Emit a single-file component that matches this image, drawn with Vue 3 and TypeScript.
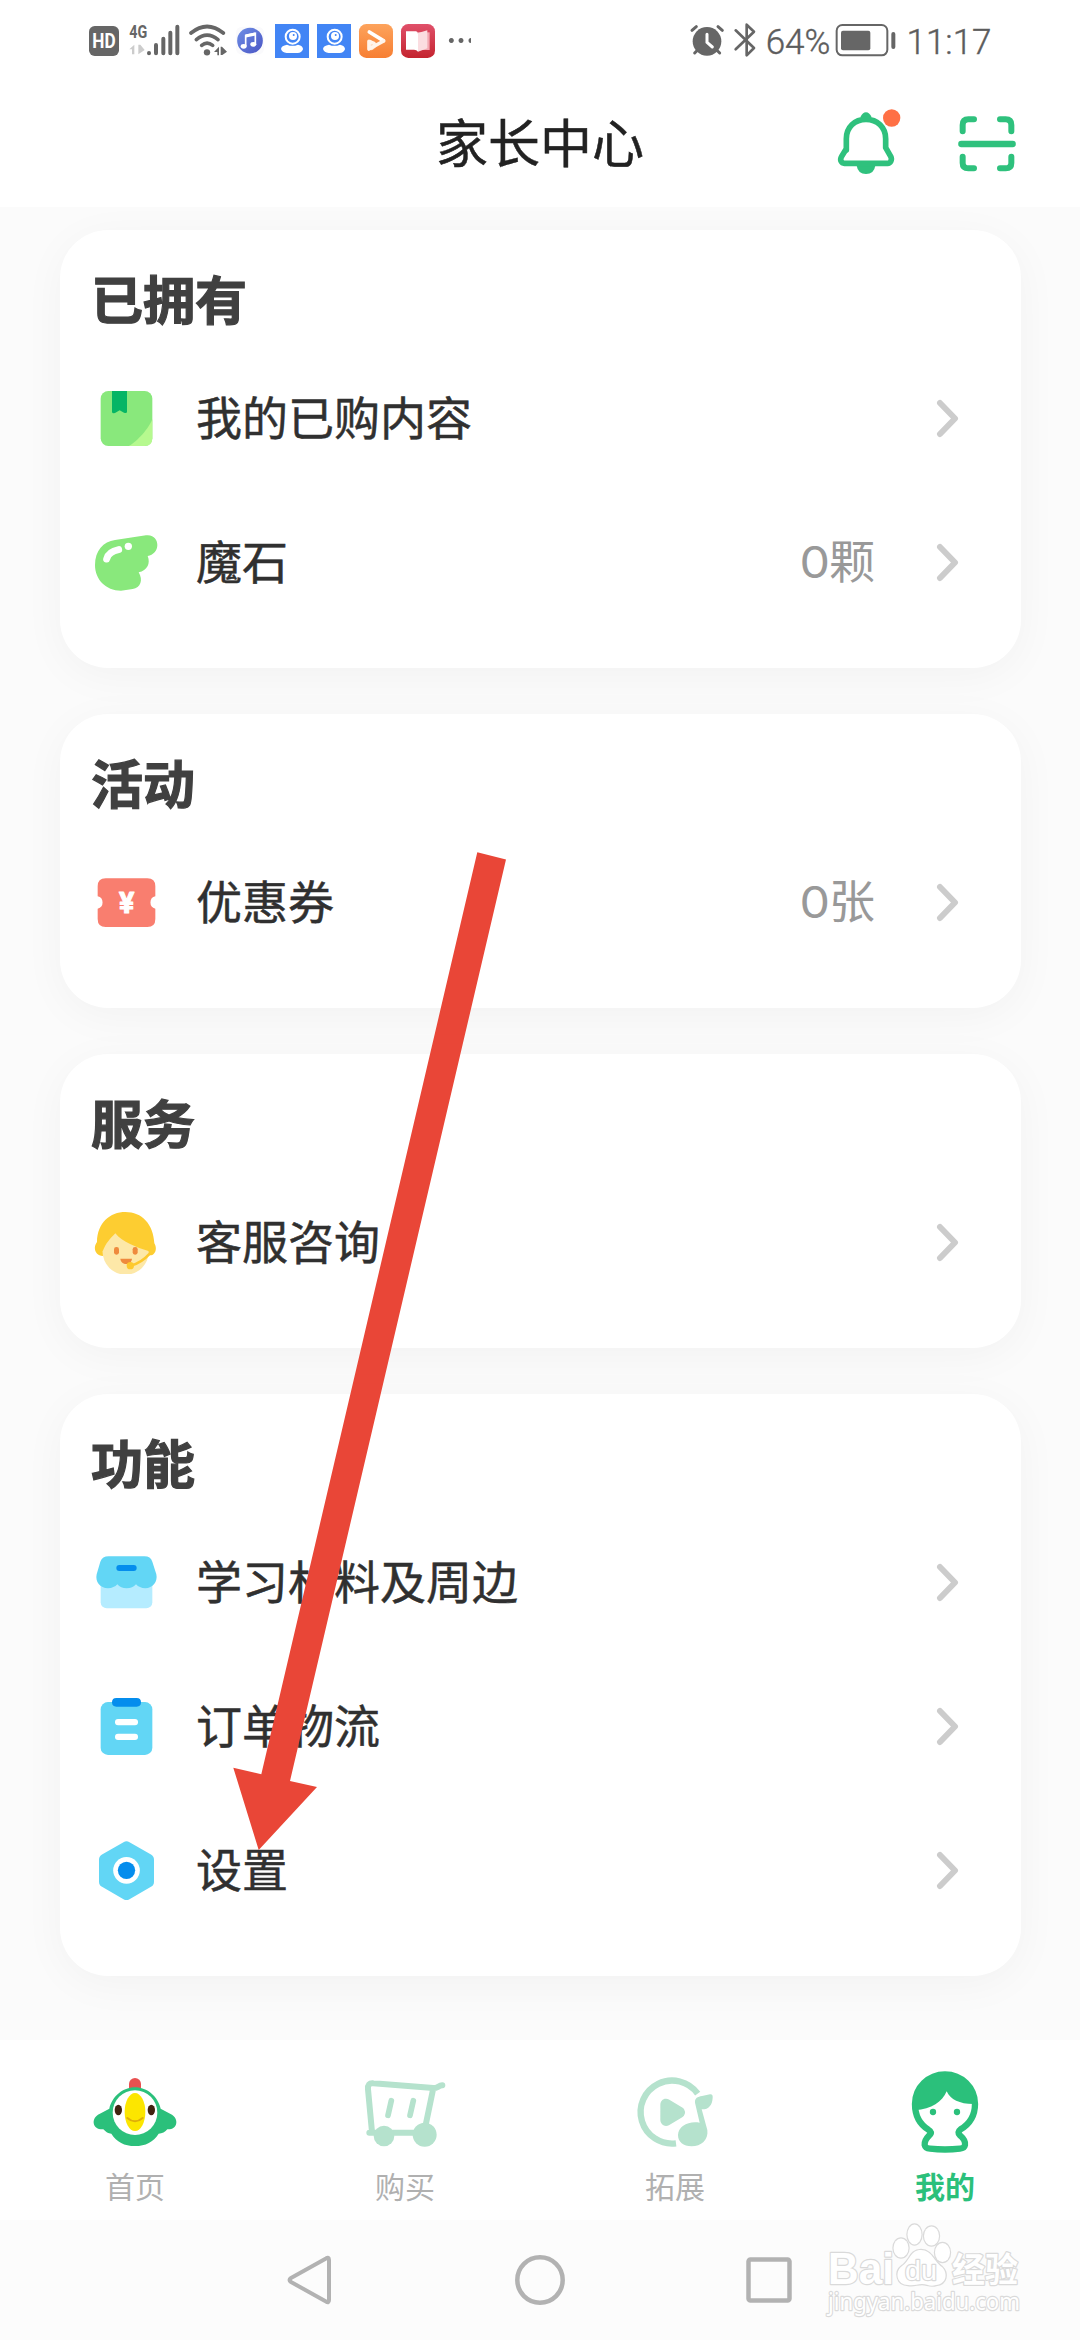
<script setup lang="ts">
interface Row {
  icon: string
  view: string
  label: string
  unit?: string
}
interface Section {
  title: string
  rows: Row[]
}

const sections: Section[] = [
  {
    title: '已拥有',
    rows: [
      { icon: 'book', view: '102 498 192 192', label: '我的已购内容' },
      { icon: 'stone', view: '102 930 192 192', label: '魔石', unit: '颗' },
    ],
  },
  {
    title: '活动',
    rows: [{ icon: 'coupon', view: '102 540 192 192', label: '优惠券', unit: '张' }],
  },
  {
    title: '服务',
    rows: [{ icon: 'service', view: '102 510 192 192', label: '客服咨询' }],
  },
  {
    title: '功能',
    rows: [
      { icon: 'store', view: '102 480 192 192', label: '学习材料及周边' },
      { icon: 'order', view: '102 102 192 192', label: '订单物流' },
      { icon: 'setting', view: '102 534 192 192', label: '设置' },
    ],
  },
]

const tabs = [
  { id: 'home', view: '90 111 270 270', label: '首页' },
  { id: 'cart', view: '900 111 270 270', label: '购买' },
  { id: 'expand', view: '90 111 270 270', label: '拓展' },
  { id: 'mine', view: '900 111 270 270', label: '我的' },
]
const activeTab = 'mine'
</script>

<template>
  <div class="screen">
    <header class="header">
      <div class="status">
        <div class="status-group">
          <svg width="36" height="42" viewBox="57 60 108 126">
            <rect x="57" y="78" width="90" height="90" rx="17" fill="#666" />
            <text x="67" y="145" class="badge" font-size="60" textLength="70" lengthAdjust="spacingAndGlyphs" fill="#fff">HD</text>
          </svg>
          <svg width="59" height="42" viewBox="165 60 177 126">
            <text x="178" y="114" class="badge" font-size="54" textLength="54" lengthAdjust="spacingAndGlyphs" fill="#666">4G</text>
            <path d="M178 148L193 134V163H186V148ZM205 134H211L224 150L205 163Z" fill="#ccc" />
            <g stroke="#666" stroke-width="12" stroke-linecap="round">
              <path d="M237 159V160M258 135V160M280 116V160M301 98V160M322 80V160" />
            </g>
          </svg>
          <svg width="48" height="42" viewBox="342 60 144 126">
            <g fill="none" stroke="#666" stroke-width="11" stroke-linecap="round">
              <path d="M363 99Q411 60 460 99" />
              <path d="M379 119Q411 92 444 119" />
              <path d="M395 136Q411 123 428 136" />
            </g>
            <circle cx="411" cy="157" r="9.500" fill="#666" />
            <path d="M432 156L447 140V166H442V156ZM452 140H456L471 155L457 165H452Z" fill="#666" />
          </svg>
          <svg width="38" height="42" viewBox="486 60 114 126">
            <defs>
              <linearGradient id="music" x1="0" y1="0" x2="1" y2="1">
                <stop offset="0" stop-color="#6f8fe6" /><stop offset="1" stop-color="#4a55c4" />
              </linearGradient>
            </defs>
            <rect x="498" y="80" width="84" height="84" rx="18" fill="#fafafc" />
            <circle cx="540" cy="122" r="38.500" fill="url(#music)" />
            <path d="M527 138V106L556 100V132" fill="none" stroke="#fff" stroke-width="5" />
            <path d="M527 108L556 102" stroke="#fff" stroke-width="9" />
            <ellipse cx="521" cy="139" rx="9" ry="7" fill="#fff" />
            <ellipse cx="550" cy="133" rx="9" ry="7" fill="#fff" />
          </svg>
          <svg v-for="n in 2" :key="n" width="42" height="42" viewBox="600 60 126 126">
            <rect x="615" y="72" width="102" height="102" fill="#4285f5" />
            <circle cx="668" cy="110" r="21" fill="none" stroke="#fff" stroke-width="6" />
            <circle cx="669" cy="108" r="12" fill="#fff" />
            <circle cx="671" cy="105" r="3" fill="#4285f5" />
            <path d="M651 134Q667 141 684 134Q700 138 699 148Q695 159 683 159H650Q636 158 633 147Q634 137 651 134Z" fill="#fff" />
          </svg>
          <svg width="42" height="42" viewBox="852 60 126 126">
            <defs>
              <linearGradient id="play" x1="0" y1="0" x2="0" y2="1">
                <stop offset="0" stop-color="#fda35c" /><stop offset="1" stop-color="#f77f33" />
              </linearGradient>
            </defs>
            <rect x="867" y="72" width="102" height="102" rx="22" fill="url(#play)" />
            <g fill="none" stroke-linecap="round" stroke-linejoin="round" stroke-width="11">
              <path d="M900 125L905 145L913 138" stroke="#ffd9bb" />
              <path d="M898 96L940 122" stroke="#fff" />
              <path d="M941 123L897 147V124L912 130" stroke="#fff4ea" />
            </g>
          </svg>
          <svg width="43" height="42" viewBox="978 60 129 126">
            <defs>
              <linearGradient id="reader" x1="0" y1="0" x2="0" y2="1">
                <stop offset="0" stop-color="#e0506a" /><stop offset="1" stop-color="#c4242f" />
              </linearGradient>
            </defs>
            <rect x="993" y="72" width="102" height="102" rx="22" fill="url(#reader)" />
            <path d="M1044 97H1079V150H1044Z" fill="#f3a9b3" />
            <path d="M1044 99L1072 91V145L1044 155Z" fill="#fbdde1" />
            <path d="M1008 94H1038Q1044 95 1044 101V155Q1040 149 1032 149H1008Z" fill="#fff" />
          </svg>
          <svg width="35" height="42" viewBox="1107 60 105 126">
            <path d="M1144 114a7.500 7.500 0 1 0 .1 0ZM1173 114a7.500 7.500 0 1 0 .1 0ZM1203 114a7.500 7.500 0 1 0 0 15Z" fill="#666" />
          </svg>
        </div>
        <div class="status-group">
          <svg width="37" height="42" viewBox="84 60 111 126">
            <circle cx="138" cy="124" r="43" fill="#666" />
            <path d="M93 91L106 80M184 91L171 80M107 153L101 159M170 153L176 159" stroke="#666" stroke-width="9" stroke-linecap="round" />
            <path d="M138 103V127L154 141" fill="none" stroke="#fff" stroke-width="9" stroke-linecap="round" />
          </svg>
          <svg width="37" height="42" viewBox="195 60 111 126">
            <path d="M224 91L279 144L257 166V74L279 95L224 148" fill="none" stroke="#666" stroke-width="8" stroke-linecap="round" stroke-linejoin="round" />
          </svg>
          <span class="status-text percent">64%</span>
          <svg width="64" height="42" viewBox="516 60 192 126">
            <rect x="527" y="75" width="152" height="91" rx="17" fill="none" stroke="#666" stroke-width="6" />
            <rect x="540" y="92" width="88" height="59" rx="6" fill="#666" />
            <rect x="691" y="96" width="12" height="51" rx="6" fill="#666" />
          </svg>
          <span class="status-text clock">11:17</span>
        </div>
      </div>

      <div class="titlebar">
        <div class="side"></div>
        <h1>家长中心</h1>
        <div class="side actions">
          <svg width="68" height="72" viewBox="528 324 204 216">
            <path d="M601 352Q608 337 618 337T635 352Z" fill="#2fc17d" />
            <path d="M590 497Q594 522 618 522T646 497Z" fill="#2fc17d" />
            <path d="M559 450V416C559 382 584 358 618 358S677 382 677 416V443L692 469C698 481 690 490 683 490H553C545 490 538 481 545 469L559 446Z" fill="none" stroke="#2fc17d" stroke-width="17" stroke-linejoin="round" />
            <circle cx="695" cy="354" r="26" fill="#ff7045" />
          </svg>
          <svg width="62" height="62" viewBox="888 339 186 186">
            <g fill="none" stroke="#2fc17d" stroke-width="18" stroke-linecap="round">
              <path d="M942 358H925Q908 358 908 375V394M1020 358H1037Q1054 358 1054 375V394M908 470V489Q908 505 925 505H942M1054 470V489Q1054 505 1037 505H1020" />
              <path d="M904 432H1058" stroke-width="19" />
            </g>
          </svg>
        </div>
      </div>
    </header>

    <main class="content">
      <section v-for="section in sections" :key="section.title" class="card">
        <h2>{{ section.title }}</h2>
        <div v-for="row in section.rows" :key="row.label" class="row">
          <svg class="row-icon" :viewBox="row.view">
            <template v-if="row.icon === 'book'">
              <rect x="122" y="513" width="155" height="165" rx="23" fill="#89e87c" />
              <path d="M277 598V655Q277 678 254 678H206C222 672 262 634 277 598Z" fill="#b6f98f" />
              <path d="M156 513H201V576Q200 581 192 578L179 571L165 579Q156 581 156 575Z" fill="#06b565" />
            </template>
            <template v-else-if="row.icon === 'stone'">
              <path d="M165 960L258 946C282 943 292 960 292 975C292 992 280 1005 263 1008C272 1030 262 1052 236 1057C250 1080 242 1104 218 1107L183 1112C137 1112 105 1078 105 1035C105 992 130 965 165 960Z" fill="#89e87c" />
              <path d="M140 1017C143 1005 155 993 176 989" fill="none" stroke="#fff" stroke-width="21" stroke-linecap="round" />
              <circle cx="205" cy="979" r="11" fill="#fff" />
            </template>
            <template v-else-if="row.icon === 'coupon'">
              <path d="M137 565H262Q286 565 286 589V619A19 19 0 0 0 286 656V687Q286 711 262 711H137Q113 711 113 687V656A19 19 0 0 0 113 619V589Q113 565 137 565Z" fill="#f97e6f" />
              <text x="200" y="670" class="yen">¥</text>
            </template>
            <template v-else-if="row.icon === 'service'">
              <ellipse cx="197" cy="635" rx="69" ry="69" fill="#fde8a8" />
              <path d="M196 516C150 516 112 548 111 606C98 622 105 648 129 648L128 634C137 610 151 595 166 580C187 607 230 622 265 633L267 646C286 648 293 625 283 610C280 552 246 516 196 516Z" fill="#fdcd31" />
              <path d="M270 640C250 662 232 672 212 677" fill="none" stroke="#fdc92e" stroke-width="8" />
              <rect x="162" y="621" width="15" height="23" rx="7" fill="#ef8a3d" />
              <rect x="218" y="621" width="15" height="23" rx="7" fill="#ef8a3d" />
              <path d="M181 656H216C214 677 183 677 181 656Z" fill="#ef8a3d" />
              <circle cx="211" cy="677" r="11" fill="#fdc92e" />
            </template>
            <template v-else-if="row.icon === 'store'">
              <rect x="122" y="560" width="155" height="95" rx="18" fill="#b5ecff" />
              <path d="M146 499H253Q272 499 277 515L289 553C294 575 278 595 256 595Q238 594 228 583Q218 595 200 595Q182 595 172 583Q162 594 144 595C120 595 105 575 110 553L121 515Q127 499 146 499Z" fill="#62d6f5" />
              <rect x="169" y="525" width="61" height="18" rx="9" fill="#048ded" />
            </template>
            <template v-else-if="row.icon === 'order'">
              <rect x="122" y="126" width="155" height="159" rx="22" fill="#62d6f5" />
              <path d="M169 114H230Q243 114 243 127Q243 140 230 140H169Q156 140 156 127Q156 114 169 114Z" fill="#048ded" />
              <rect x="165" y="177" width="69" height="19" rx="9" fill="#fff" />
              <rect x="165" y="221" width="69" height="19" rx="9" fill="#fff" />
            </template>
            <template v-else>
              <path d="M199.500 562L264 599V665L199.500 702L135 665V599Z" fill="#62d6f5" stroke="#62d6f5" stroke-width="36" stroke-linejoin="round" />
              <circle cx="199.500" cy="631" r="40" fill="#fff" />
              <circle cx="199.500" cy="631" r="26" fill="#048ded" />
            </template>
          </svg>
          <span class="label">{{ row.label }}</span>
          <span v-if="row.unit" class="value"><span class="digit">0</span>{{ row.unit }}</span>
          <svg class="chevron" width="24" height="40" viewBox="0 0 24 40">
            <path d="M4 5L19 20.500L4 36" fill="none" stroke="#ccc" stroke-width="6" stroke-linecap="round" stroke-linejoin="round" />
          </svg>
        </div>
      </section>
    </main>

    <nav class="tabbar">
      <div v-for="tab in tabs" :key="tab.id" class="tab" :class="{ active: tab.id === activeTab }">
        <svg width="90" height="90" :viewBox="tab.view">
          <template v-if="tab.id === 'home'">
            <rect x="207" y="144" width="36" height="50" rx="18" fill="#e85050" />
            <path d="M225 172C262 172 294 200 302 236L336 254C358 268 352 300 322 298C316 306 306 311 296 311C280 336 257 348 225 348C193 348 170 336 154 311C144 311 138 306 130 298C98 300 92 268 114 254L148 236C156 200 188 172 225 172Z" fill="#2bc07b" />
            <circle cx="225" cy="248" r="67" fill="#fff" />
            <ellipse cx="225" cy="246" rx="31" ry="57" fill="#fce600" />
            <ellipse cx="175" cy="240" rx="11" ry="16" fill="#40220f" />
            <ellipse cx="274" cy="240" rx="11" ry="16" fill="#40220f" />
            <path d="M202 264Q225 284 248 264" fill="none" stroke="#dfae08" stroke-width="6" stroke-linecap="round" />
          </template>
          <template v-else-if="tab.id === 'cart'">
            <g fill="none" stroke="#b5e2cd" stroke-width="18" stroke-linecap="round" stroke-linejoin="round">
              <path d="M928 308H1080M936 306L924 178Q922 158 940 160L1120 174L1096 290M1118 174C1132 176 1134 167 1147 166" />
              <path d="M994 212L984 256M1060 212L1050 256" stroke-width="17" />
            </g>
            <circle cx="972" cy="318" r="31" fill="#b5e2cd" />
            <circle cx="1094" cy="314" r="36" fill="#b5e2cd" />
          </template>
          <template v-else-if="tab.id === 'expand'">
            <path d="M293 191A94.500 94.500 0 1 0 228 340" fill="none" stroke="#b5e2cd" stroke-width="19" />
            <path d="M198 223V271L238 247Z" fill="#b5e2cd" stroke="#b5e2cd" stroke-width="34" stroke-linejoin="round" />
            <path d="M285 218C284 204 293 200 306 198L330 193Q339 192 338 203C337 226 325 239 305 238L322 300C326 330 303 349 275 349C250 348 234 336 234 315C235 288 266 272 299 278Z" fill="#b5e2cd" stroke="#fff" stroke-width="12" paint-order="stroke" />
          </template>
          <template v-else>
            <path d="M985 299C958 282 945 255 945 222A90 89 0 0 1 1125 222C1125 255 1112 280 1082 298Q1070 307 1080 316C1094 328 1097 335 1095 345Q1093 355 1080 356Q1035 361 990 356Q976 355 974 345C973 335 978 326 988 316Q999 307 985 299Z" fill="none" stroke="#2bc07b" stroke-width="19" stroke-linejoin="round" />
            <path d="M945 241C995 238 1027 215 1040 184C1052 210 1080 223 1125 222A90 89 0 0 0 945 222Z" fill="#2bc07b" />
            <circle cx="999" cy="246" r="9.500" fill="#2bc07b" />
            <circle cx="1071" cy="246" r="9.500" fill="#2bc07b" />
          </template>
        </svg>
        <span>{{ tab.label }}</span>
      </div>
    </nav>

    <footer class="sysnav">
      <svg width="50" height="56" viewBox="1 0 50 56">
        <path d="M43 6.500Q46 4.500 46 8V48Q46 51.500 43 49.500L8 30Q5 28 8 26Z" fill="none" stroke="#b2b2b2" stroke-width="4" stroke-linejoin="round" />
      </svg>
      <svg width="56" height="56" viewBox="0 0 56 56">
        <circle cx="28" cy="28" r="22.700" fill="none" stroke="#b2b2b2" stroke-width="4.500" />
      </svg>
      <svg width="50" height="56" viewBox="2 0 50 56">
        <rect x="4.500" y="7.500" width="41" height="41" rx="2" fill="none" stroke="#b2b2b2" stroke-width="4.500" />
      </svg>
    </footer>

    <svg class="watermark" viewBox="0 0 200 110">
      <g class="outlined">
        <text x="4" y="64" class="wm-bold" font-size="45" textLength="66" lengthAdjust="spacingAndGlyphs">Bai</text>
        <ellipse cx="77" cy="28" rx="7.500" ry="9.500" />
        <ellipse cx="90.500" cy="14.500" rx="7" ry="10" />
        <ellipse cx="107.500" cy="16" rx="7.500" ry="9.500" />
        <ellipse cx="118.500" cy="32.500" rx="7.500" ry="9.500" />
        <path d="M97 30C86 30 86 41 78 46C70 52 73 65 84 65C90 66 93 64 98 64S106 67 112 65C123 64 124 53 118 47C110 42 108 30 97 30Z" />
        <text x="81" y="60" class="wm-bold wm-du" font-size="28" textLength="32" lengthAdjust="spacingAndGlyphs">du</text>
        <text x="128" y="62" class="wm-cjk" font-size="34" textLength="66" lengthAdjust="spacingAndGlyphs">经验</text>
        <text x="4" y="90" class="wm-latin" font-size="24" textLength="192" lengthAdjust="spacingAndGlyphs">jingyan.baidu.com</text>
      </g>
    </svg>

    <svg class="pointer" viewBox="0 0 1080 2340">
      <path d="M477.300 852.300L506 859.500L290 1781L317 1787L258.700 1850L233.300 1767.700L261.300 1774.300Z" fill="#e94637" />
    </svg>
  </div>
</template>

<style>
body {
  margin: 0;
  background: #fbfbfb;
}
</style>

<style scoped>
.screen {
  position: relative;
  width: 1080px;
  height: 2340px;
  overflow: hidden;
  display: flex;
  flex-direction: column;
  background: #fbfbfb;
  font-family: 'Noto Sans CJK SC', sans-serif;
  color: #303030;
}
svg {
  display: block;
  flex: none;
}
.header {
  height: 207px;
  background: #fff;
  position: relative;
  z-index: 1;
}
.status {
  height: 82px;
  box-sizing: border-box;
  padding: 0 79px 0 89px;
  display: flex;
  justify-content: space-between;
  align-items: center;
}
.status-group {
  display: flex;
  align-items: center;
}
.status-text {
  font-family: Roboto, sans-serif;
  font-weight: 300;
  font-size: 35px;
  line-height: 42px;
  padding-top: 3px;
  color: #5c5c5c;
  -webkit-text-stroke: 0.4px #5c5c5c;
  white-space: nowrap;
}
.percent {
  width: 70px;
  text-align: center;
}
.clock {
  width: 104px;
  text-align: center;
}
.badge {
  font-family: Roboto, sans-serif;
  font-weight: 700;
}
.titlebar {
  height: 124px;
  display: flex;
  align-items: center;
}
.side {
  width: 400px;
  flex: none;
}
.actions {
  box-sizing: border-box;
  padding-right: 62px;
  display: flex;
  align-items: center;
  justify-content: flex-end;
  gap: 52px;
}
h1 {
  flex: 1;
  margin: 0;
  padding-bottom: 6px;
  text-align: center;
  font-size: 52px;
  font-weight: 400;
  line-height: 60px;
  white-space: nowrap;
  color: #222;
  -webkit-text-stroke: 0.5px #222;
}
.content {
  height: 1833px;
  box-sizing: border-box;
  padding: 23px 59px 0 60px;
  display: flex;
  flex-direction: column;
  gap: 46px;
}
.card {
  background: #fff;
  border-radius: 48px;
  padding-bottom: 34px;
  box-shadow: 0 8px 44px rgba(0, 0, 0, 0.038);
}
h2 {
  margin: 0;
  height: 116px;
  box-sizing: border-box;
  padding: 38px 0 0 31px;
  font-size: 52px;
  font-weight: 700;
  line-height: 60px;
  color: #404040;
  -webkit-text-stroke: 1.2px #404040;
}
.row {
  height: 144px;
  padding: 0 61px 0 34px;
  display: flex;
  align-items: center;
}
.row-icon {
  width: 64px;
  height: 64px;
  margin-right: 38px;
}
.yen {
  font-family: Roboto, sans-serif;
  font-weight: 700;
  font-size: 86px;
  text-anchor: middle;
  fill: #fff;
  stroke: #fff;
  stroke-width: 3px;
  stroke-linejoin: round;
}
.label {
  flex: 1;
  padding-bottom: 6px;
  font-size: 46px;
  line-height: 60px;
  -webkit-text-stroke: 0.5px #303030;
}
.value {
  display: flex;
  align-items: baseline;
  margin-right: 61px;
  padding-bottom: 4px;
  font-size: 46px;
  line-height: 60px;
  color: #999;
}
.digit {
  font-family: Inter, sans-serif;
  font-size: 44px;
  transform: scaleX(1.1);
}
.tabbar {
  height: 180px;
  display: flex;
  background: #fff;
}
.tab {
  flex: 1;
  display: flex;
  flex-direction: column;
  align-items: center;
  padding-top: 27px;
  gap: 8px;
  font-size: 30px;
  line-height: 40px;
  color: #b0b0b0;
}
.tab.active {
  color: #2bc07b;
  font-weight: 700;
}
.sysnav {
  height: 120px;
  display: flex;
  justify-content: center;
  align-items: center;
  gap: 178px;
  background: #fcfcfc;
}
.watermark {
  position: absolute;
  left: 824px;
  top: 2220px;
  width: 200px;
  height: 110px;
}
.outlined {
  fill: #fff;
  stroke: #dadada;
  stroke-width: 2.4px;
  stroke-linejoin: round;
  paint-order: stroke;
}
.wm-bold {
  font-family: 'Liberation Sans', sans-serif;
  font-weight: 700;
}
.wm-du {
  font-weight: 400;
}
.wm-latin {
  font-family: 'Noto Sans', sans-serif;
}
.wm-cjk {
  font-family: 'Noto Sans CJK SC', sans-serif;
  font-weight: 700;
}
.pointer {
  position: absolute;
  left: 0;
  top: 0;
  width: 1080px;
  height: 2340px;
  z-index: 2;
}
</style>
